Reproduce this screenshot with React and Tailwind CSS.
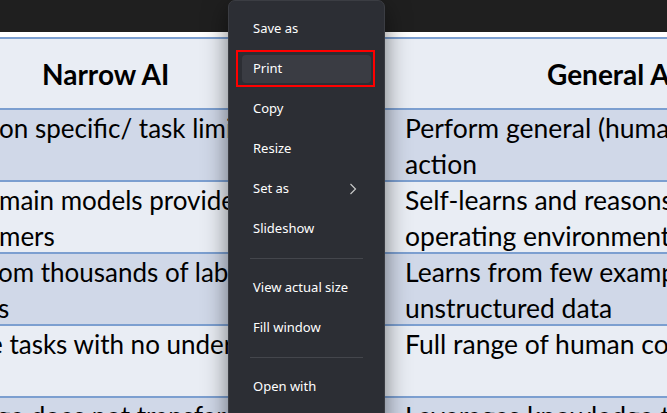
import React from 'react';

const rows = [
    { left: ['on specific/ task limited', ''], leftShift: '-ml-[1px]', right: ['Perform general (human level) intelligent', 'action'], dark: true },
    { left: ['main models provided by', 'mers'], leftShift: '-ml-[1px]', right: ['Self-learns and reasons with its', 'operating environment'], dark: false },
    { left: ['om thousands of labeled', 's'], leftShift: '-ml-[2px]', right: ['Learns from few examples and/or', 'unstructured data'], dark: true },
    { left: ['e tasks with no understanding', ''], leftShift: '-ml-[11px]', right: ['Full range of human cognitive abilities', ''], dark: false },
    { left: ['ge does not transfer', ''], leftShift: '-ml-[3px]', right: ['Leverages knowledge transfer to new', ''], dark: true },
];

const menuItems = [
    { label: 'Save as' },
    { label: 'Print', active: true },
    { label: 'Copy' },
    { label: 'Resize' },
    { label: 'Set as', sub: true },
    { label: 'Slideshow' },
    { sep: true },
    { label: 'View actual size' },
    { label: 'Fill window' },
    { sep: true },
    { label: 'Open with' },
];

function ContextMenu() {
    return (
        <div className="absolute left-[228px] top-0 w-[157px] h-[440px] rounded-[7px] bg-[#2c2e34] border border-[#3b3d43] shadow-[0_8px_24px_rgba(0,0,0,0.5)] pt-[8px] font-['Noto_Sans',sans-serif] text-[13px] text-white">
            {menuItems.map((item, i) =>
                item.sep ? (
                    <div key={i} className="h-[19px] flex items-center px-[21px]">
                        <div className="w-full h-px bg-[#44464c]"></div>
                    </div>
                ) : (
                    <div key={i} className="relative h-[40px] flex items-center px-[13px]">
                        <div className={`w-full h-[28px] rounded-[4px] flex items-center justify-between pl-[11px] pr-[14px] ${item.active ? 'bg-[#3a3c43]' : ''}`}>
                            <span>{item.label}</span>
                            {item.sub && (
                                <svg className="w-[8px] h-[12px] text-[#c8c8c8]" viewBox="0 0 8 12" fill="none" stroke="currentColor" strokeWidth="1.2">
                                    <path d="M1.5 1l5 5-5 5" />
                                </svg>
                            )}
                        </div>
                        {item.active && (
                            <div className="absolute left-[7px] right-[9px] top-[1px] bottom-[2px] border-2 border-[#ff0000]"></div>
                        )}
                    </div>
                )
            )}
        </div>
    );
}

export default function App() {
    return (
        <div className="relative w-[667px] h-[413px] overflow-hidden bg-white font-['Lato',sans-serif] text-black">
            <div className="h-[32px] bg-[#1f1f1f]"></div>
            <div className="h-[5px] bg-white"></div>

            {/* Header */}
            <div className="grid grid-cols-[385px_1fr] h-[71px] bg-[#e9edf4] border-t-2 border-[#7c9fd0]">
                <div className="flex items-center pl-[42px] text-[28px] font-bold whitespace-nowrap">Narrow AI</div>
                <div className="flex items-center pl-[162px] text-[28px] font-bold whitespace-nowrap overflow-hidden">General AI</div>
            </div>

            {rows.map((row, i) => (
                <div key={i} className={`grid grid-cols-[385px_1fr] h-[72px] border-t-2 border-[#7c9fd0] leading-[36px] ${row.dark ? 'bg-[#d0d8e8]' : 'bg-[#e9edf4]'}`}>
                    <div className="overflow-hidden whitespace-nowrap text-[26px]">
                        <div className={row.leftShift}>{row.left[0]}</div>
                        <div className={row.leftShift}>{row.left[1]}</div>
                    </div>
                    <div className="overflow-hidden whitespace-nowrap pl-[20px] text-[26.5px]">
                        <div>{row.right[0]}</div>
                        <div>{row.right[1]}</div>
                    </div>
                </div>
            ))}

            <ContextMenu />
        </div>
    );
}
